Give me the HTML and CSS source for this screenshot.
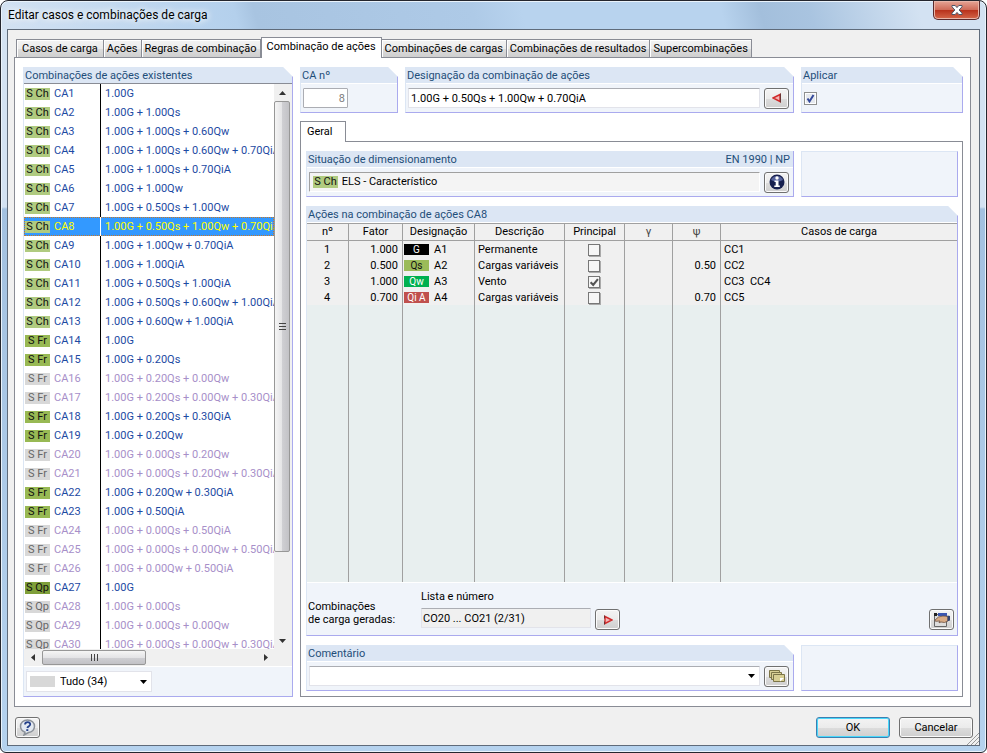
FILE: index.html
```html
<!DOCTYPE html>
<html lang="pt">
<head>
    <meta charset="UTF-8">
    <meta name="viewport" content="width=device-width, initial-scale=1.0">
    <title>Editar casos e combinações de carga</title>
    <link rel="stylesheet" href="styles.css">
</head>
<body>
    <div class="window">
        <header class="titlebar">
            <h1>Editar casos e combinações de carga</h1>
            <button class="close" aria-label="Fechar">
                <svg width="12" height="10" viewBox="0 0 12 10"><path d="M1 .5h3.2L6 2.6 7.8.5H11v1.3L8.1 5 11 8.2v1.3H7.8L6 7.4 4.2 9.5H1V8.2L3.9 5 1 1.8z" fill="#fff" stroke="#4c5668"/></svg>
            </button>
        </header>

        <div class="client">
            <nav class="tabs">
                <button class="tab">Casos de carga</button>
                <button class="tab">Ações</button>
                <button class="tab">Regras de combinação</button>
                <button class="tab active">Combinação de ações</button>
                <button class="tab">Combinações de cargas</button>
                <button class="tab">Combinações de resultados</button>
                <button class="tab">Supercombinações</button>
            </nav>

            <main class="page">
                <section class="group existing">
                    <h2>Combinações de ações existentes</h2>
                    <div class="list">
                        <div class="list-rows">
                            <table class="combos">
                                <tbody id="combos"></tbody>
                            </table>
                        </div>
                        <div class="scroll-v">
                            <button class="arrow" aria-label="Para cima"><svg width="7" height="4"><path d="M0 4l3.500-4L7 4z" fill="#333"/></svg></button>
                            <div class="thumb-v"><svg width="7" height="9"><path d="M0 1.500h7M0 4.500h7M0 7.500h7" stroke="#444"/></svg></div>
                            <button class="arrow" aria-label="Para baixo"><svg width="7" height="4"><path d="M0 0l3.500 4L7 0z" fill="#333"/></svg></button>
                        </div>
                    </div>
                    <div class="scroll-h">
                        <button class="arrow" aria-label="Para a esquerda"><svg width="4" height="7"><path d="M4 0L0 3.500 4 7z" fill="#333"/></svg></button>
                        <div class="thumb-h"><svg width="9" height="7"><path d="M1.500 0v7M4.500 0v7M7.500 0v7" stroke="#444"/></svg></div>
                        <button class="arrow" aria-label="Para a direita"><svg width="4" height="7"><path d="M0 0l4 3.500L0 7z" fill="#333"/></svg></button>
                    </div>
                    <div class="list-footer">
                        <select class="filter" aria-label="Filtro">
                            <option>Tudo (34)</option>
                        </select>
                    </div>
                </section>

                <div class="details">
                    <div class="row">
                        <section class="group number">
                            <h2><label for="caNumber">CA nº</label></h2>
                            <div class="group-body">
                                <input type="text" id="caNumber" class="field short" value="8" disabled>
                            </div>
                        </section>
                        <section class="group grow">
                            <h2><label for="caName">Designação da combinação de ações</label></h2>
                            <div class="group-body">
                                <input type="text" id="caName" class="field" value="1.00G + 0.50Qs + 1.00Qw + 0.70QiA">
                                <button class="icon-button" aria-label="Gerar designação">
                                    <svg width="10" height="10" viewBox="0 0 10 10"><path d="M1 5l7-3.500v7z" fill="#f6b4b4" stroke="#d02c2c" stroke-width="1.400"/><path d="M8.500 .5v9" stroke="#6b3434"/></svg>
                                </button>
                            </div>
                        </section>
                        <section class="group apply">
                            <h2><label for="apply">Aplicar</label></h2>
                            <div class="group-body">
                                <input type="checkbox" id="apply" class="check" checked>
                            </div>
                        </section>
                    </div>

                    <nav class="subtabs">
                        <button class="subtab">Geral</button>
                    </nav>

                    <div class="subpage">
                        <div class="row">
                            <section class="group square grow">
                                <h2>Situação de dimensionamento <span>EN 1990 | NP</span></h2>
                                <div class="group-body">
                                    <div class="field readonly"><span class="badge ch">S Ch</span> ELS - Característico</div>
                                    <button class="icon-button" aria-label="Informação">
                                        <svg width="16" height="16" viewBox="0 0 16 16"><circle cx="8" cy="8" r="7.500" fill="#17204f"/><path d="M2 6a6.500 6.500 0 0 1 12 0Q8 9 2 6z" fill="#56639c"/><circle cx="8" cy="4" r="1.700" fill="#fff"/><path d="M5.500 6.500h4v5h1.300V13H5.300v-1.500h1.400V8H5.500z" fill="#fff"/></svg>
                                    </button>
                                </div>
                            </section>
                            <section class="group square side"></section>
                        </div>

                        <section class="group actions">
                            <h2>Ações na combinação de ações CA8</h2>
                            <div class="grid">
                                <table class="actions-table">
                                    <colgroup>
                                        <col class="c-num"><col class="c-factor"><col class="c-name"><col class="c-desc"><col class="c-main"><col class="c-gamma"><col class="c-psi"><col>
                                    </colgroup>
                                    <thead>
                                        <tr><th>nº</th><th>Fator</th><th>Designação</th><th>Descrição</th><th>Principal</th><th class="greek">γ</th><th class="greek">ψ</th><th>Casos de carga</th></tr>
                                    </thead>
                                    <tbody>
                                        <tr>
                                            <td class="center">1</td><td class="right">1.000</td>
                                            <td><span class="type g">G</span>A1</td><td>Permanente</td>
                                            <td class="center"><input type="checkbox" class="check flat" aria-label="Principal A1"></td>
                                            <td></td><td class="right"></td><td>CC1</td>
                                        </tr>
                                        <tr>
                                            <td class="center">2</td><td class="right">0.500</td>
                                            <td><span class="type qs">Qs</span>A2</td><td>Cargas variáveis</td>
                                            <td class="center"><input type="checkbox" class="check flat" aria-label="Principal A2"></td>
                                            <td></td><td class="right">0.50</td><td>CC2</td>
                                        </tr>
                                        <tr>
                                            <td class="center">3</td><td class="right">1.000</td>
                                            <td><span class="type qw">Qw</span>A3</td><td>Vento</td>
                                            <td class="center"><input type="checkbox" class="check flat" aria-label="Principal A3" checked></td>
                                            <td></td><td class="right"></td><td>CC3&nbsp; CC4</td>
                                        </tr>
                                        <tr>
                                            <td class="center">4</td><td class="right">0.700</td>
                                            <td><span class="type qia">Qi A</span>A4</td><td>Cargas variáveis</td>
                                            <td class="center"><input type="checkbox" class="check flat" aria-label="Principal A4"></td>
                                            <td></td><td class="right">0.70</td><td>CC5</td>
                                        </tr>
                                        <tr class="filler"><td></td><td></td><td></td><td></td><td></td><td></td><td></td><td></td></tr>
                                    </tbody>
                                </table>
                            </div>
                            <div class="generated">
                                <p>Combinações<br>de carga geradas:</p>
                                <div class="generated-field">
                                    <label for="generated">Lista e número</label>
                                    <input type="text" id="generated" class="field gray" value="CO20 ... CO21 (2/31)" readonly>
                                </div>
                                <button class="icon-button" aria-label="Ir para combinações de carga">
                                    <svg width="10" height="10" viewBox="0 0 10 10"><path d="M9 5L2 1.500v7z" fill="#f6b4b4" stroke="#d02c2c" stroke-width="1.400"/><path d="M1.500 .5v3M1.500 6.500v3" stroke="#6b3434"/></svg>
                                </button>
                                <button class="icon-button last" aria-label="Detalhes">
                                    <svg width="16" height="14" viewBox="0 0 16 14"><path d="M.5 1.500h12v12H.5z" fill="#ddd" stroke="#666"/><path d="M0 0h3v3H0z" fill="#222"/><path d="M4 0h9v3H4z" fill="#3a55b0"/><path d="M1 7l3.500-3L9 3l5 .5V8l-3.500 1.500L7 9 5 9.800 6 8l-4.500.3z" fill="#d8ab86" stroke="#6d5140" stroke-width=".8"/><path d="M13.500 2.500L16 3v4.500l-2.500.8z" fill="#35446f"/></svg>
                                </button>
                            </div>
                        </section>

                        <div class="row">
                            <section class="group grow">
                                <h2><label for="comment">Comentário</label></h2>
                                <div class="group-body">
                                    <select id="comment" class="field comment">
                                        <option></option>
                                    </select>
                                    <button class="icon-button" aria-label="Escolher comentário">
                                        <svg width="16" height="13" viewBox="0 0 16 13"><g fill="#d8cf94" stroke="#7c7548"><path d="M.5.500h10v7H.5z"/><path d="M2.500 2.500h10v7h-10z"/><path d="M4.500 4.500h11v7h-11z"/></g><path d="M11 11.500V8h4z" fill="#fff"/></svg>
                                    </button>
                                </div>
                            </section>
                            <section class="group square side"></section>
                        </div>
                    </div>
                </div>
            </main>

            <footer class="buttons">
                <button class="icon-button" aria-label="Ajuda">
                    <svg width="17" height="17" viewBox="0 0 17 17"><path d="M8.500 1C4.500 1 1.500 3.700 1.500 7.300c0 3 2 5 4.500 5.900L5 16l4.500-2.500c3.500-.3 6-3 6-6.200C15.500 3.700 12.500 1 8.500 1z" fill="#e3e9f1" stroke="#8b9199" stroke-width="1.500"/><path d="M6 5.500c.2-3.200 5.500-3.200 5.200 0C11 7.300 8.800 7 8.300 9" fill="none" stroke="#24408a" stroke-width="1.800"/><path d="M7.300 10.200h2v1.800h-2z" fill="#24408a"/></svg>
                </button>
                <button class="button default">OK</button>
                <button class="button">Cancelar</button>
            </footer>
            <svg class="grip" width="12" height="12" viewBox="0 0 12 12"><path d="M0 12L12 0M4 12l8-8M8 12l4-4" stroke="#999"/></svg>
        </div>
    </div>

    <script>
        // [situation, formula, generated]
        const combinations = [
            ['Ch', '1.00G', 1],
            ['Ch', '1.00G + 1.00Qs', 1],
            ['Ch', '1.00G + 1.00Qs + 0.60Qw', 1],
            ['Ch', '1.00G + 1.00Qs + 0.60Qw + 0.70QiA', 1],
            ['Ch', '1.00G + 1.00Qs + 0.70QiA', 1],
            ['Ch', '1.00G + 1.00Qw', 1],
            ['Ch', '1.00G + 0.50Qs + 1.00Qw', 1],
            ['Ch', '1.00G + 0.50Qs + 1.00Qw + 0.70QiA', 1],
            ['Ch', '1.00G + 1.00Qw + 0.70QiA', 1],
            ['Ch', '1.00G + 1.00QiA', 1],
            ['Ch', '1.00G + 0.50Qs + 1.00QiA', 1],
            ['Ch', '1.00G + 0.50Qs + 0.60Qw + 1.00QiA', 1],
            ['Ch', '1.00G + 0.60Qw + 1.00QiA', 1],
            ['Fr', '1.00G', 1],
            ['Fr', '1.00G + 0.20Qs', 1],
            ['Fr', '1.00G + 0.20Qs + 0.00Qw', 0],
            ['Fr', '1.00G + 0.20Qs + 0.00Qw + 0.30QiA', 0],
            ['Fr', '1.00G + 0.20Qs + 0.30QiA', 1],
            ['Fr', '1.00G + 0.20Qw', 1],
            ['Fr', '1.00G + 0.00Qs + 0.20Qw', 0],
            ['Fr', '1.00G + 0.00Qs + 0.20Qw + 0.30QiA', 0],
            ['Fr', '1.00G + 0.20Qw + 0.30QiA', 1],
            ['Fr', '1.00G + 0.50QiA', 1],
            ['Fr', '1.00G + 0.00Qs + 0.50QiA', 0],
            ['Fr', '1.00G + 0.00Qs + 0.00Qw + 0.50QiA', 0],
            ['Fr', '1.00G + 0.00Qw + 0.50QiA', 0],
            ['Qp', '1.00G', 1],
            ['Qp', '1.00G + 0.00Qs', 0],
            ['Qp', '1.00G + 0.00Qs + 0.00Qw', 0],
            ['Qp', '1.00G + 0.00Qs + 0.00Qw + 0.30QiA', 0]
        ];
        const selected = 8;

        document.getElementById('combos').innerHTML = combinations.map(([type, formula, active], index) => {
            const number = index + 1;
            const rowClass = number === selected ? 'selected' : active ? '' : 'off';
            return `<tr class="${rowClass}">
                <td><span class="badge ${type.toLowerCase()}">S ${type}</span>CA${number}</td>
                <td>${formula}</td>
            </tr>`;
        }).join('');
    </script>
</body>
</html>
```

FILE: styles.css
```css
* {
    box-sizing: border-box;
}
body {
    margin: 0;
    background: #fff;
    color: #000;
    font: 11px/14px Roboto, "Liberation Sans", Arial, sans-serif;
}
h1, h2, p {
    margin: 0;
    font-weight: normal;
}
button, input, select {
    font: inherit;
    color: inherit;
    margin: 0;
}
svg {
    display: block;
}

/* window frame */
.window {
    display: flex;
    flex-direction: column;
    height: 100vh;
    min-height: 600px;
    padding: 0 6px 6px;
    border: 1px solid #24262e;
    border-radius: 8px 8px 6px 6px;
    background:
        linear-gradient(75deg, #d3e2f2, #b8d3ee 20%, #b4d0ec 24%, #a8c4e1 26%, #aecae7 48%, #b8d3ee 53%, #b8d3ee 73%, #a3bfdc 77%, #a9c4e0 82%, #d3e2f2 93%) top / 100% 28px no-repeat,
        linear-gradient(#d3e2f2 0, #d3e2f2 206px, #a3c1e0 208px, #b5d2ee 100%);
    box-shadow: inset 0 0 0 1px #eaf3fb;
}
.titlebar {
    display: flex;
    justify-content: space-between;
    align-items: flex-start;
    height: 28px;
    flex: none;
}
h1 {
    padding: 5px 1px;
    font-size: 12px;
    line-height: 18px;
    text-shadow: 0 0 6px #fff, 0 0 8px #fff;
}
.close {
    display: flex;
    justify-content: center;
    align-items: center;
    width: 47px;
    height: 19px;
    padding: 0;
    border: 1px solid #5b2a2c;
    border-top: 0;
    border-radius: 0 0 5px 5px;
    background: linear-gradient(#e6a596, #cf6c59 48%, #b7301a 50%, #d5674a);
    box-shadow: inset 0 0 0 1px #e8b5a8;
}
.client {
    position: relative;
    display: flex;
    flex-direction: column;
    flex: 1;
    min-height: 0;
    padding: 7px 8px 0 6px;
    border: 1px solid #5f6b7a;
    background: #f0f0f0;
}

/* tabs */
.tabs {
    display: flex;
    align-items: flex-end;
    flex: none;
    height: 20px;
    padding-left: 2px;
}
.tab {
    height: 18px;
    padding: 1px 3px 0;
    border: 1px solid #898c95;
    border-bottom: 0;
    border-left-width: 0;
    background: linear-gradient(#f3f3f3, #ebebeb 50%, #dcdcdc 52%, #cfcfcf);
    box-shadow: inset 1px 1px 0 #fff;
    white-space: nowrap;
}
.tab:first-child {
    padding: 1px 5px 0;
    border-left-width: 1px;
}
.tab.active {
    z-index: 1;
    height: 21px;
    margin-bottom: -1px;
    padding: 0 5px 2px;
    border-left-width: 1px;
    background: #fff;
}
.page {
    display: flex;
    gap: 7px;
    flex: 1;
    min-height: 0;
    padding: 9px 7px 9px 8px;
    border: 1px solid #898c95;
    background: #fff;
}

/* groups */
.group {
    display: flex;
    flex-direction: column;
    min-width: 0;
    border: 1px solid #aaaaee;
    border-top: 0;
    border-left-color: #dce6f4;
    background: #f0f4fa;
    clip-path: polygon(0 0, calc(100% - 10px) 0, 100% 10px, 100% 100%, 0 100%);
}
.group.square {
    clip-path: none;
}
.group h2 {
    display: flex;
    justify-content: space-between;
    flex: none;
    height: 17px;
    padding: 2px 3px 0 1px;
    border-bottom: 1px solid #fff;
    background: #dce6f4;
    color: #1f4e79;
    font-size: 11px;
}
.group-body {
    display: flex;
    align-items: center;
    gap: 4px;
    height: 28px;
    padding: 0 4px 0 2px;
}
.grow {
    flex: 1;
}
.row {
    display: flex;
    gap: 7px;
    flex: none;
}
.existing {
    flex: none;
    width: 270px;
}
.details {
    display: flex;
    flex-direction: column;
    flex: 1;
    min-width: 0;
}
.number {
    width: 98px;
}
.apply {
    width: 162px;
}
.side {
    width: 157px;
    border-top: 1px solid #dce6f4;
}

/* list of combinations */
.existing h2 {
    border-bottom-color: #898c95;
}
.list {
    display: flex;
    flex: 1;
    min-height: 0;
    background: #fff;
}
.list-rows {
    flex: 1;
    overflow: hidden;
}
.combos {
    width: 100%;
    table-layout: fixed;
    border-collapse: separate;
    border-spacing: 0;
    color: #1d4aa3;
}
.combos td {
    height: 19px;
    padding: 1px 0 0 4px;
    white-space: nowrap;
    overflow: hidden;
}
.combos td:first-child {
    width: 77px;
    padding-left: 1px;
    border-right: 1px solid #000;
}
.badge {
    display: inline-block;
    width: 25px;
    height: 12px;
    margin-right: 4px;
    background: #b0cb80;
    color: #111;
    line-height: 12px;
    text-align: center;
}
.badge.fr {
    background: #98b954;
}
.badge.qp {
    background: #7f9f3a;
}
.off {
    color: #a78fc9;
}
.off .badge {
    background: #d8d8d8;
    color: #666;
}
.selected {
    background: #3399ff;
    color: #ffff00;
    outline: 1px dotted #c87828;
    outline-offset: -1px;
}
.combos .selected td:first-child {
    border-right-color: #fff;
}

/* scroll bars */
.scroll-v, .scroll-h {
    display: flex;
    flex: none;
    background: #f0f0f0;
}
.scroll-v {
    flex-direction: column;
    width: 18px;
    padding-right: 2px;
}
.scroll-h {
    height: 17px;
    padding-right: 18px;
}
.arrow {
    display: flex;
    justify-content: center;
    align-items: center;
    flex: none;
    width: 17px;
    height: 17px;
    padding: 0;
    border: 0;
    background: none;
}
.thumb-v, .thumb-h {
    display: flex;
    justify-content: center;
    align-items: center;
    border: 1px solid #979797;
    border-radius: 2px;
    background: linear-gradient(90deg, #f5f5f5, #e4e4e6 50%, #cfcfd3 52%, #c2c2c6);
}
.thumb-v {
    flex: 0 0 85%;
    margin-bottom: auto;
    max-height: 451px;
}
.thumb-h {
    width: 104px;
    margin: 1px auto 1px 1px;
    background: linear-gradient(#f5f5f5, #e4e4e6 50%, #cfcfd3 52%, #c2c2c6);
}
.list-footer {
    flex: none;
    padding: 4px 2px;
    border-top: 1px solid #fff;
}

/* fields */
.field {
    flex: 1;
    min-width: 0;
    height: 20px;
    padding: 0 2px;
    border: 1px solid #e2e3ea;
    border-top-color: #abadb3;
    border-radius: 1px;
    background: #fff;
    line-height: 18px;
}
.field.short {
    flex: none;
    width: 45px;
    border-color: #abadb3;
    color: #808080;
    text-align: right;
}
.field.readonly {
    padding: 0 3px;
    border-color: #a0a0a0 #fff #fff #a0a0a0;
    background: #f4f4f4;
}
.readonly .badge {
    margin-right: 1px;
}
.field.gray {
    flex: none;
    width: 170px;
    padding: 0 1px;
    background: #f0f0f0;
}
.field.comment, .filter {
    appearance: none;
    background: #fff url("data:image/svg+xml,%3Csvg xmlns='http://www.w3.org/2000/svg' width='7' height='4'%3E%3Cpath d='M0 0h7L3.500 4z'/%3E%3C/svg%3E") right 4px center no-repeat;
}
.filter {
    display: block;
    width: 126px;
    height: 21px;
    padding: 0 16px 0 33px;
    border: 1px solid #e2e3ea;
    background-image:
        url("data:image/svg+xml,%3Csvg xmlns='http://www.w3.org/2000/svg' width='7' height='4'%3E%3Cpath d='M0 0h7L3.500 4z'/%3E%3C/svg%3E"),
        linear-gradient(#d8d8d8, #d8d8d8);
    background-position: right 4px center, 3px center;
    background-size: auto, 25px 11px;
    background-repeat: no-repeat;
}
.check {
    appearance: none;
    width: 13px;
    height: 13px;
    border: 1px solid #8e8f8f;
    background: #e6e9ee;
    box-shadow: inset 0 0 0 1px #fff;
}
.check:checked {
    background: #e6e9ee url("data:image/svg+xml,%3Csvg xmlns='http://www.w3.org/2000/svg' width='11' height='11'%3E%3Cpath d='M2.500 5.500L4.500 8.500 8.500 2' fill='none' stroke='%2334499a' stroke-width='2'/%3E%3C/svg%3E") center no-repeat;
}
.check.flat {
    display: block;
    width: 12px;
    height: 12px;
    margin: 0 auto;
    border: 1px solid #777;
    background-color: #f6f6f6;
    box-shadow: 1px 1px 0 #aaa;
}
.check.flat:checked {
    background-image: url("data:image/svg+xml,%3Csvg xmlns='http://www.w3.org/2000/svg' width='11' height='11'%3E%3Cpath d='M2 5.500L4.500 8 9 2.500' fill='none' stroke='%23555' stroke-width='2'/%3E%3C/svg%3E");
}
.icon-button, .button {
    display: flex;
    justify-content: center;
    align-items: center;
    flex: none;
    width: 25px;
    height: 21px;
    padding: 0;
    border: 1px solid #707070;
    border-radius: 3px;
    background: linear-gradient(#f3f3f3, #ebebeb 50%, #dcdcdc 52%, #cfcfcf);
    box-shadow: inset 0 0 0 1px #fbfbfb;
}

/* general tab */
.subtabs {
    display: flex;
    flex: none;
    height: 20px;
    margin-top: 8px;
}
.subtab {
    height: 21px;
    width: 46px;
    padding: 0 6px 1px;
    border: 1px solid #898c95;
    border-bottom: 0;
    background: #fff;
    text-align: left;
    z-index: 1;
}
.subpage {
    display: flex;
    flex-direction: column;
    gap: 9px;
    flex: 1;
    min-height: 0;
    padding: 9px 4px 5px 5px;
    border: 1px solid #898c95;
}
.actions {
    flex: 1;
    min-height: 0;
}
.grid {
    display: flex;
    flex: 1;
    min-height: 0;
    border-top: 1px solid #a0a0a0;
}
.actions-table {
    width: 100%;
    height: 100%;
    table-layout: fixed;
    border-collapse: separate;
    border-spacing: 0;
    background: #f0f0f0;
}
.actions-table th {
    height: 17px;
    padding: 0;
    border-bottom: 1px solid #a0a0a0;
    font-weight: normal;
}
.actions-table td {
    height: 16px;
    padding: 1px 4px 0 3px;
    white-space: nowrap;
}
.actions-table th + th, .actions-table td + td {
    border-left: 1px solid #a0a0a0;
}
.actions-table td:nth-child(3) {
    padding-left: 1px;
}
.actions-table .filler td {
    height: auto;
    background: #e8efef;
}
.actions-table .greek {
    color: #444;
}
.center {
    text-align: center;
}
.right {
    text-align: right;
}
.c-num { width: 41px; }
.c-factor { width: 54px; }
.c-name { width: 72px; }
.c-desc { width: 90px; }
.c-main { width: 60px; }
.c-gamma { width: 48px; }
.c-psi { width: 48px; }
.type {
    display: inline-block;
    width: 25px;
    height: 11px;
    margin-right: 5px;
    color: #fff;
    font-size: 10px;
    line-height: 11px;
    text-align: center;
}
.type.g { background: #000; }
.type.qs { background: #9bbb59; color: #111; }
.type.qw { background: #00b050; }
.type.qia { background: #c0504d; }

.generated {
    display: flex;
    align-items: flex-end;
    flex: none;
    gap: 4px;
    height: 53px;
    padding: 0 3px 5px 1px;
    border-top: 1px solid #fff;
}
.generated p {
    width: 109px;
    padding-bottom: 4px;
    line-height: 13px;
}
.generated-field {
    display: flex;
    flex-direction: column;
    gap: 4px;
    padding-bottom: 2px;
}
.last {
    margin-left: auto;
}

/* bottom buttons */
.buttons {
    display: flex;
    align-items: center;
    flex: none;
    gap: 9px;
    height: 38px;
    margin-right: -2px;
    padding: 3px 0 0 1px;
}
.buttons .icon-button {
    margin-right: auto;
}
.button {
    width: 74px;
}
.button.default {
    border-color: #3c7fb1;
    box-shadow: inset 0 0 0 1px #48d8fb;
}
.grip {
    position: absolute;
    right: 0;
    bottom: 0;
}
```
